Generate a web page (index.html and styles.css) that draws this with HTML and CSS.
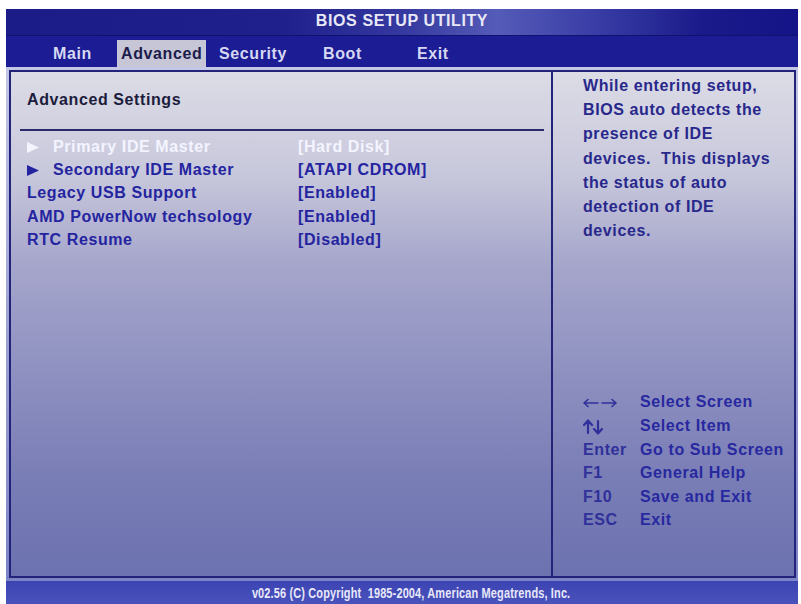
FILE: index.html
```html
<!DOCTYPE html>
<html>
<head>
<meta charset="utf-8">
<link rel="stylesheet" href="styles.css">
</head>
<body>
<div class="screen">
  <div class="title">BIOS SETUP UTILITY</div>
  <div class="menu">
    <span class="tab">Main</span>
    <span class="tab active">Advanced</span>
    <span class="tab">Security</span>
    <span class="tab">Boot</span>
    <span class="tab">Exit</span>
  </div>
  <div class="body">
    <div class="frame">
      <div class="left">
        <div class="heading">Advanced Settings</div>
        <div class="rule"></div>
        <div class="items">
          <div class="row selected">
            <span class="label"><span class="arrow"><svg width="12" height="11" viewBox="0 0 12 11"><polygon points="0,0 12,5.5 0,11" fill="currentColor"/></svg></span>Primary IDE Master</span>
            <span class="value">[Hard Disk]</span>
          </div>
          <div class="row">
            <span class="label"><span class="arrow"><svg width="12" height="11" viewBox="0 0 12 11"><polygon points="0,0 12,5.5 0,11" fill="currentColor"/></svg></span>Secondary IDE Master</span>
            <span class="value">[ATAPI CDROM]</span>
          </div>
          <div class="row">
            <span class="label">Legacy USB Support</span>
            <span class="value">[Enabled]</span>
          </div>
          <div class="row">
            <span class="label">AMD PowerNow techsology</span>
            <span class="value">[Enabled]</span>
          </div>
          <div class="row">
            <span class="label">RTC Resume</span>
            <span class="value">[Disabled]</span>
          </div>
        </div>
      </div>
      <div class="right">
        <div class="help">While entering setup,<br>BIOS auto detects the<br>presence of IDE<br>devices.&nbsp; This displays<br>the status of auto<br>detection of IDE<br>devices.</div>
        <div class="keys">
          <span class="key"><svg class="icon" width="34" height="12" viewBox="0 0 34 12"><path d="M1 6H15M1 6L5 2.5M1 6L5 9.5M19 6H33M33 6L29 2.5M33 6L29 9.5" fill="none" stroke="currentColor" stroke-width="1.6" stroke-linecap="round"/></svg></span><span class="desc">Select Screen</span>
          <span class="key"><svg class="icon" width="22" height="16" viewBox="0 0 22 16"><path d="M5 14V2M1 6L5 1.5L9 6M15 2V14M11 10L15 14.5L19 10" fill="none" stroke="currentColor" stroke-width="2.2" stroke-linecap="round" stroke-linejoin="round"/></svg></span><span class="desc">Select Item</span>
          <span class="key">Enter</span><span class="desc">Go to Sub Screen</span>
          <span class="key">F1</span><span class="desc">General Help</span>
          <span class="key">F10</span><span class="desc">Save and Exit</span>
          <span class="key">ESC</span><span class="desc">Exit</span>
        </div>
      </div>
    </div>
  </div>
  <div class="footer"><span class="copy">v02.56 (C) Copyright&nbsp; 1985-2004, American Megatrends, Inc.</span></div>
</div>
</body>
</html>
```
FILE: styles.css
```css
html, body {
  margin: 0;
  padding: 0;
  background: #ffffff;
}
body {
  font-family: "Liberation Sans", Arial, sans-serif;
  font-weight: bold;
  font-size: 16px;
  letter-spacing: 0.6px;
}
.screen {
  margin: 9px 3px 0 6px;
  width: 792px;
  height: 595px;
  display: flex;
  flex-direction: column;
  overflow: hidden;
}
.title {
  height: 26px;
  line-height: 24px;
  text-align: center;
  color: #e8e8f6;
  background: linear-gradient(to right, #1c1c88 0%, #20208c 35%, #34389f 50%, #555bb8 62%, #3a3ea6 74%, #1a1a8a 88%, #141488 100%);
  border-bottom: 1px solid #12126e;
}
.menu {
  height: 31px;
  background: #1c1c94;
  display: grid;
  grid-template-columns: 68px 98px 104px 94px auto;
  padding-left: 43px;
  align-items: end;
}
.tab {
  justify-self: start;
  height: 27px;
  line-height: 27px;
  padding: 0 4px;
  color: #d6d8f2;
}
.tab.active {
  background: #c6c6d6;
  color: #1c1c4c;
}
.body {
  flex: 1;
  padding: 3px 2px 3px 3px;
  background: linear-gradient(to bottom, #c4c6e6 0%, #9ea2d4 50%, #7c84c6 100%);
  display: flex;
}
.frame {
  flex: 1;
  border: 2px solid #23237a;
  display: grid;
  grid-template-columns: 542px 1fr;
  background: linear-gradient(to bottom, #dcdce6 0%, #c8c8dc 20%, #a6a6cc 38%, #8e90c0 60%, #7a7eb6 80%, #6c72b0 100%);
}
.left {
  border-right: 2px solid #23237a;
  padding-top: 18px;
}
.heading {
  padding-left: 16px;
  line-height: 20px;
  color: #1c1c3c;
}
.rule {
  height: 2px;
  background: #2a2a6a;
  margin: 19px 7px 0 9px;
}
.items {
  margin-top: 4px;
  padding-left: 16px;
}
.row {
  display: grid;
  grid-template-columns: 271px auto;
  line-height: 23.2px;
  color: #2424a0;
}
.row.selected {
  color: #f4f4ff;
}
.arrow {
  display: inline-block;
  width: 26px;
}
.arrow svg {
  display: inline-block;
  vertical-align: -1px;
}
.right {
  padding: 2px 4px 44px 30px;
  display: flex;
  flex-direction: column;
  justify-content: space-between;
  color: #28288c;
}
.help {
  line-height: 24.2px;
}
.keys {
  display: grid;
  grid-template-columns: 57px auto;
  line-height: 23.6px;
  color: #2828a0;
}
.key {
  color: #30309a;
}
.icon {
  display: inline-block;
  vertical-align: middle;
}
.footer {
  flex: 0 0 23px;
  line-height: 23px;
  text-align: center;
  padding-left: 18px;
  color: #e8e8f8;
  background: linear-gradient(to bottom, #3c44b2, #4a52bc);
}
.copy {
  display: inline-block;
  font-size: 15px;
  letter-spacing: 0.2px;
  transform: scaleX(0.73);
}
```
